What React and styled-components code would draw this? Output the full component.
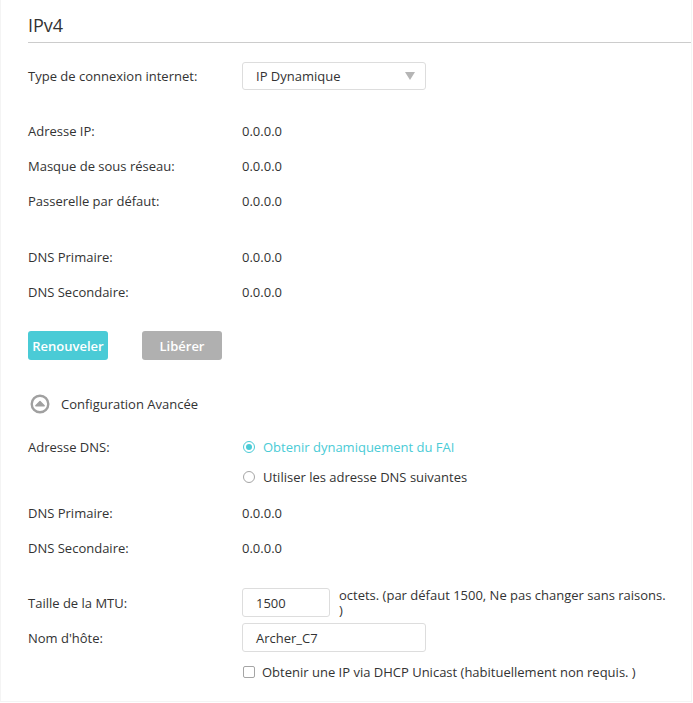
import React from 'react'
import styled, { createGlobalStyle } from 'styled-components'

const GlobalStyle = createGlobalStyle`
  html, body {
    margin: 0;
    padding: 0;
    background: #ffffff;
  }
  body {
    font-family: "Open Sans", "Liberation Sans", sans-serif;
    font-size: 13px;
    color: #333333;
  }
`

const Panel = styled.div`
  width: 692px;
  height: 702px;
  border: 1px solid #f4f4f4;
  border-top: 0;
  box-sizing: border-box;
  padding: 0 0 0 27px;
  overflow: hidden;
`

const Title = styled.h2`
  margin: 0;
  padding-top: 13px;
  height: 29px;
  font-size: 18px;
  font-weight: 400;
  color: #333333;
  border-bottom: 1px solid #cccccc;
  box-sizing: content-box;
  line-height: 24px;
`

const Row = styled.div`
  display: grid;
  grid-template-columns: 214px 1fr;
  align-items: ${p => (p.top ? 'start' : 'center')};
  min-height: ${p => p.h || 35}px;
  margin-top: ${p => p.gap || 0}px;
`

const Label = styled.div`
  color: #333333;
  line-height: 18px;
`

const Value = styled.div`
  color: #333333;
  line-height: 18px;
`

const SelectBox = styled.div`
  width: 184px;
  height: 28px;
  box-sizing: border-box;
  border: 1px solid #dddddd;
  border-radius: 3px;
  display: flex;
  align-items: center;
  justify-content: space-between;
  padding: 0 10px 0 13px;
  color: #333333;
`

const Caret = styled.span`
  width: 0;
  height: 0;
  border-left: 5px solid transparent;
  border-right: 5px solid transparent;
  border-top: 8px solid #b5b5b5;
`

const ButtonBar = styled.div`
  display: flex;
  gap: 34px;
  margin-top: 22px;
`

const Button = styled.button`
  width: 80px;
  height: 29px;
  border: 0;
  border-radius: 3px;
  background: ${p => (p.gray ? '#b0b0b0' : '#4acbd6')};
  color: #ffffff;
  font-family: inherit;
  font-size: 13px;
  font-weight: 600;
  padding: 0;
`

const Advanced = styled.div`
  display: flex;
  align-items: center;
  gap: 11px;
  height: 35px;
  margin-top: 26px;
  padding-left: 2px;
`

const RadioGroup = styled.div`
  display: flex;
  flex-direction: column;
`

const Option = styled.label`
  display: flex;
  align-items: center;
  gap: 8px;
  height: 30px;
  padding-left: 1px;
  color: ${p => (p.active ? '#4acbd6' : '#333333')};
`

const Radio = styled.span`
  width: 12px;
  height: 12px;
  box-sizing: border-box;
  border-radius: 50%;
  border: 1px solid ${p => (p.checked ? '#4acbd6' : '#a5a5a5')};
  display: flex;
  align-items: center;
  justify-content: center;
  &::after {
    content: '';
    width: 6px;
    height: 6px;
    border-radius: 50%;
    background: ${p => (p.checked ? '#4acbd6' : 'transparent')};
  }
`

const Input = styled.div`
  width: ${p => p.w}px;
  height: 29px;
  box-sizing: border-box;
  border: 1px solid #dddddd;
  border-radius: 3px;
  display: flex;
  align-items: center;
  padding-left: 13px;
  color: #333333;
`

const InputLine = styled.div`
  display: flex;
  align-items: flex-start;
  gap: 9px;
  height: 29px;
`

const Hint = styled.div`
  line-height: 15px;
  color: #333333;
  white-space: nowrap;
`

const CheckLine = styled.label`
  display: flex;
  align-items: center;
  gap: 7px;
  padding-left: 1px;
  height: 30px;
`

const Box = styled.span`
  width: 12px;
  height: 12px;
  box-sizing: border-box;
  border: 1px solid #a5a5a5;
  border-radius: 2px;
`

function CollapseIcon() {
  return (
    <svg width="20" height="20" viewBox="0 0 20 20">
      <circle cx="10" cy="10" r="8.3" fill="none" stroke="#a0a0a0" strokeWidth="2.4" />
      <path d="M5.8 11.8 L10 7.6 L14.2 11.8 Z" fill="#a0a0a0" stroke="#a0a0a0" strokeWidth="1.4" strokeLinejoin="round" />
    </svg>
  )
}

export default function App() {
  return (
    <>
      <GlobalStyle />
      <Panel>
        <Title>IPv4</Title>

        <Row gap={15}>
          <Label>Type de connexion internet:</Label>
          <SelectBox>
            IP Dynamique
            <Caret />
          </SelectBox>
        </Row>

        <Row gap={20}>
          <Label>Adresse IP:</Label>
          <Value>0.0.0.0</Value>
        </Row>
        <Row>
          <Label>Masque de sous réseau:</Label>
          <Value>0.0.0.0</Value>
        </Row>
        <Row>
          <Label>Passerelle par défaut:</Label>
          <Value>0.0.0.0</Value>
        </Row>

        <Row gap={21}>
          <Label>DNS Primaire:</Label>
          <Value>0.0.0.0</Value>
        </Row>
        <Row>
          <Label>DNS Secondaire:</Label>
          <Value>0.0.0.0</Value>
        </Row>

        <ButtonBar>
          <Button>Renouveler</Button>
          <Button gray>Libérer</Button>
        </ButtonBar>

        <Advanced>
          <CollapseIcon />
          Configuration Avancée
        </Advanced>

        <Row gap={11} top>
          <Label style={{ marginTop: 6 }}>Adresse DNS:</Label>
          <RadioGroup>
            <Option active>
              <Radio checked />
              Obtenir dynamiquement du FAI
            </Option>
            <Option>
              <Radio />
              Utiliser les adresse DNS suivantes
            </Option>
          </RadioGroup>
        </Row>

        <Row gap={3}>
          <Label>DNS Primaire:</Label>
          <Value>0.0.0.0</Value>
        </Row>
        <Row>
          <Label>DNS Secondaire:</Label>
          <Value>0.0.0.0</Value>
        </Row>

        <Row gap={23} h={29}>
          <Label>Taille de la MTU:</Label>
          <InputLine>
            <Input w={88}>1500</Input>
            <Hint>
              octets. (par défaut 1500, Ne pas changer sans raisons.
              <br />)
            </Hint>
          </InputLine>
        </Row>
        <Row gap={6} h={29}>
          <Label>Nom d'hôte:</Label>
          <Input w={184}>Archer_C7</Input>
        </Row>
        <Row gap={5} h={30}>
          <span />
          <CheckLine>
            <Box />
            Obtenir une IP via DHCP Unicast (habituellement non requis. )
          </CheckLine>
        </Row>
      </Panel>
    </>
  )
}
